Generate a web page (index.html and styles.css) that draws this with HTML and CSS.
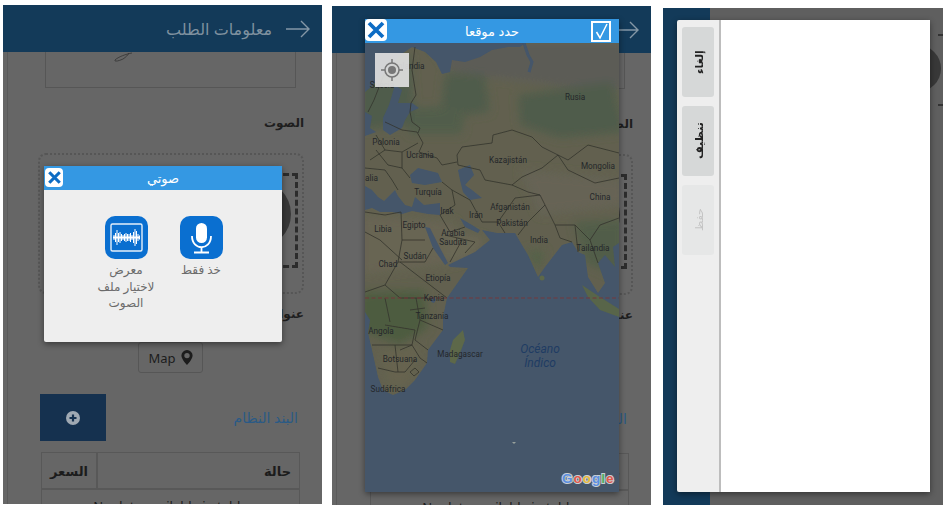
FILE: index.html
```html
<!DOCTYPE html>
<html>
<head>
  <meta charset="utf-8">
  <title>Order info</title>
  <link rel="stylesheet" href="styles.css">
</head>
<body>
  <div class="shots">

    <!-- first shot: audio picker -->
    <div class="phone phone-a">
      <div class="page" dir="rtl">
        <div class="topbar">
          <svg class="back" width="24" height="18" viewBox="0 0 24 18"><path d="M0 9H23M15 1L23 9L15 17" fill="none" stroke="#8497a6" stroke-width="1.400"/></svg>
          <span class="topbar-title">معلومات الطلب</span>
        </div>
        <div class="body">
          <div class="sign"><svg width="20" height="10" viewBox="0 0 20 10"><path d="M18 1C12 2 4 5 1 8C0 10 5 9 9 7C12 5 14 3 15 1" fill="none" stroke="#333" stroke-width=".8"/></svg></div>
          <div class="label first">الصوت</div>
          <div class="dotted"><div class="frame"><div class="disc"></div></div></div>
          <div class="label addr">عنوان</div>
          <div class="map-btn" dir="ltr">Map <svg width="12" height="15" viewBox="0 0 12 15"><path d="M6 0a5.600 5.600 0 0 0-5.600 5.600C.4 9.500 6 15 6 15s5.600-5.500 5.600-9.400A5.600 5.600 0 0 0 6 0zm0 8.300a2.700 2.700 0 1 1 0-5.400a2.700 2.700 0 0 1 0 5.400z" fill="#1c1c1c"/></svg></div>
          <div class="items">
            <span class="items-link">البند النظام</span>
            <div class="add"><svg width="14" height="14" viewBox="0 0 14 14"><circle cx="7" cy="7" r="7" fill="#9fa9b3"/><path d="M7 3.500V10.500M3.500 7H10.500" stroke="#15314f" stroke-width="2.200"/></svg></div>
          </div>
          <table class="grid">
            <tr><th>حالة</th><th class="price">السعر</th></tr>
            <tr><td colspan="2" dir="ltr">No data available in table</td></tr>
          </table>
        </div>
      </div>

      <div class="dialog dialog-audio">
        <div class="dialog-head">
          <span class="close small"><svg width="15" height="15" viewBox="0 0 20 20"><path d="M3 3L17 17M17 3L3 17" stroke="#0d6cc4" stroke-width="4.200"/></svg></span>
          <span class="dialog-title">صوتي</span>
        </div>
        <div class="choices" dir="rtl">
          <div class="choice">
            <div class="app-icon">
              <svg width="43" height="43" viewBox="0 0 43 43"><rect x="16" y="7" width="11" height="20" rx="5.500" fill="#fff"/><path d="M12 20c0 15 19 15 19 0M21.500 31V36M14 36.500H29" fill="none" stroke="#fff" stroke-width="1.800"/></svg>
            </div>
            <div class="choice-text">خذ فقط</div>
          </div>
          <div class="choice">
            <div class="app-icon">
              <svg width="43" height="43" viewBox="0 0 43 43"><rect x="6" y="8" width="31" height="27" rx="1.500" fill="none" stroke="#e4effa" stroke-width="1.400"/><path d="M8 21.500h27" stroke="#fff" stroke-width="2"/><path d="M9 19v5M10.500 17v9M12 14v15M13.500 17v9M15 16v11M16.500 18v7M18 19v5M19.500 18v7M21 17v9M22.500 18v7M24 18v7M25.500 17v9M27 19v5M28.500 16v11M30 13v17M31.500 15v13M33 18v7M34.500 19.500v4" stroke="#fff" stroke-width="1"/></svg>
            </div>
            <div class="choice-text">معرض<br>لاختيار ملف<br>الصوت</div>
          </div>
        </div>
      </div>
    </div>

    <!-- second shot: map picker -->
    <div class="phone phone-b">
      <div class="page" dir="rtl">
        <div class="topbar">
          <svg class="back" width="24" height="18" viewBox="0 0 24 18"><path d="M0 9H23M15 1L23 9L15 17" fill="none" stroke="#8497a6" stroke-width="1.400"/></svg>
          <span class="topbar-title">معلومات الطلب</span>
        </div>
        <div class="body">
          <div class="sign"></div>
          <div class="label first">الصوت</div>
          <div class="dotted"><div class="frame"><div class="disc"></div></div></div>
          <div class="label addr">عنوان</div>
          <div class="map-btn" dir="ltr">Map</div>
          <div class="items">
            <span class="items-link">البند النظام</span>
            <div class="add"></div>
          </div>
          <table class="grid">
            <tr><th>حالة</th><th class="price">السعر</th></tr>
            <tr><td colspan="2" dir="ltr">No data available in table</td></tr>
          </table>
        </div>
      </div>

      <div class="dialog dialog-map">
        <div class="dialog-head">
          <span class="close"><svg width="20" height="20" viewBox="0 0 20 20"><path d="M3 3L17 17M17 3L3 17" stroke="#0d6cc4" stroke-width="3.800"/></svg></span>
          <span class="dialog-title">حدد موقعا</span>
          <span class="confirm"><svg width="15" height="17" viewBox="0 0 15 17"><path d="M2.500 9L6 15L13 1" fill="none" stroke="#fff" stroke-width="1.500"/></svg></span>
        </div>
        <div class="map">
          <svg class="map-art" width="254" height="449" viewBox="365 43 254 449">
            <defs>
              <filter id="soft"><feGaussianBlur stdDeviation="5"/></filter>
              <filter id="fuzz"><feGaussianBlur stdDeviation=".35"/></filter>
            </defs>
            <g filter="url(#fuzz)">
              <rect x="365" y="43" width="254" height="449" fill="#62614f"/>
              <g filter="url(#soft)">
                <path d="M430 43H625V90L560 85L500 78L450 70Z" fill="#5b5c56"/>
                <path d="M445 73L485 75L490 112L440 118Z" fill="#4f5c4b"/>
                <path d="M405 108L465 106L462 134L410 134Z" fill="#515d4c"/>
                <path d="M518 95L612 82L625 132L560 138L520 125Z" fill="#4f5c4b"/>
                <path d="M360 55L410 55L415 125L360 130Z" fill="#505c4c"/>
                <path d="M360 292L425 290L428 328L400 345L360 330Z" fill="#4e5b41"/>
                <path d="M360 215L455 222L460 262L360 275Z" fill="#686553"/>
                <path d="M445 232L485 238L470 258L448 262Z" fill="#6a6755"/>
                <path d="M520 170L625 180L625 205L540 215Z" fill="#666354"/>
                <path d="M574 222L625 220L625 280L585 262Z" fill="#515d48"/>
                <path d="M525 250L545 250L540 274Z" fill="#55624a"/>
                <path d="M380 350L420 345L410 385L388 388Z" fill="#666450"/>
              </g>
              <g fill="#44566b">
                <path d="M365 43H525L520 47L508 47L492 50L480 57L465 62L452 60L450 72L442 74L436 62L425 52L412 47L400 55L385 72L372 86L365 92Z"/>
                <path d="M395 85L402 90L398 103L412 103L419 108L410 112L405 120L402 128L390 135L383 130L383 118L389 105Z"/>
                <path d="M365 112L372 116L370 128L376 132L365 136Z"/>
                <path d="M365 186L372 190L378 197L384 201L395 190L398 196L405 205L412 207L415 197L424 205L440 203L440 215L428 214L412 211L402 214L392 212L380 212L372 208L365 210Z"/>
                <path d="M410 175L418 168L438 173L442 182L425 185L412 183Z"/>
                <path d="M458 170L470 165L474 175L465 185L472 190L482 198L470 200L463 192L460 180Z"/>
                <path d="M460 218L472 225L480 230L478 233L465 227Z"/>
                <path d="M425 227L430 228L440 248L448 263L445 265L433 248Z"/>
                <path d="M619 492H365V312L370 320L368 333L372 350L378 377L383 390L393 395L405 390L415 380L427 363L428 350L443 330L443 317L447 298L468 268L450 267L448 265L475 252L490 240L482 230L497 233L515 233L522 245L528 255L538 277L545 267L562 245L572 242L578 252L585 255L588 277L598 293L605 283L598 263L605 255L615 267L613 247L619 243Z"/>
              </g>
              <path d="M524 43L528 55L532 62L529 72" fill="none" stroke="#44566b" stroke-width="3"/>
              <path d="M582 285L600 297L619 309V317L600 310L588 297Z" fill="#586548"/>
              <path d="M463 330L465 340L460 353L455 364L450 362L450 350L453 340Z" fill="#5d6748"/>
              <circle cx="542" cy="278" r="2.500" fill="#5d6748"/>
              <path d="M512 442h4l-2 2z" fill="#98a09c"/>
              <path d="M431 298l3 -1l2 3l-2 3l-3 -1z" fill="#44566b"/>
              <g fill="none" stroke="#34342c" stroke-width=".8">
                <path d="M415 47L412 70L416 95L411 103L410 112L412 122L420 128L418 133"/>
                <path d="M385 72L374 100L368 112"/>
                <path d="M457 155L462 147L492 143L493 135L512 130L532 137L542 147L558 155L542 168L522 177L512 185L485 180L480 170L458 165L457 155"/>
                <path d="M558 155L568 160L588 145L619 153M558 155L568 170L595 183L619 178"/>
                <path d="M385 122L402 130L417 132L423 143L419 152L437 158L442 165L457 162M376 135L385 150L402 152L418 143M376 150L388 165L402 168L410 178M365 168L385 170L392 180L398 190M402 152L402 168M385 150L370 160"/>
                <path d="M442 182L452 190L470 200L482 222L498 222L515 198L540 195L545 205L528 222L518 235M512 185L528 192L540 195M498 222L505 233M452 190L455 205L440 215L450 232L465 227"/>
                <path d="M545 205L555 225L575 225L590 240L600 225L619 218M555 225L560 238L572 242M575 225L578 252M590 240L598 263"/>
                <path d="M365 212L385 215L401 212L402 240M402 240H425M402 240L398 262L385 285L365 292M398 262L425 262L433 248M400 262L430 285L447 298M385 285L400 298L425 298L432 300M365 232L380 240L402 260"/>
                <path d="M445 235L475 242L465 253M450 262L462 240"/>
                <path d="M416 298L420 320L443 330M420 320L415 340L428 350M385 325L415 330L412 345L400 350M372 345L395 345L412 345L420 358L427 363M378 368L395 372L405 372L415 360M395 345L398 372M385 298L390 322M410 310L425 308"/>
                <path d="M410 372l5 -4l4 4l-5 4z"/>
              </g>
              <path d="M365 298H619" stroke="#74393a" stroke-width="1" stroke-dasharray="4 2.500"/>
            </g>
            <g class="map-labels" text-anchor="middle">
              <text x="575" y="100">Rusia</text>
              <text x="408" y="69">Finlandia</text>
              <text x="382" y="88">Suecia</text>
              <text x="386" y="145">Polonia</text>
              <text x="420" y="158">Ucrania</text>
              <text x="508" y="163">Kazajistán</text>
              <text x="598" y="169">Mongolia</text>
              <text x="369" y="181">Italia</text>
              <text x="428" y="195">Turquía</text>
              <text x="600" y="200">China</text>
              <text x="447" y="214">Irak</text>
              <text x="476" y="218">Irán</text>
              <text x="510" y="210">Afganistán</text>
              <text x="512" y="226">Pakistán</text>
              <text x="383" y="232">Libia</text>
              <text x="414" y="228">Egipto</text>
              <text x="453" y="236">Arabia</text>
              <text x="453" y="245">Saudita</text>
              <text x="539" y="243">India</text>
              <text x="593" y="251">Tailandia</text>
              <text x="415" y="259">Sudán</text>
              <text x="388" y="267">Chad</text>
              <text x="438" y="281">Etiopía</text>
              <text x="434" y="301">Kenia</text>
              <text x="432" y="319">Tanzania</text>
              <text x="381" y="334">Angola</text>
              <text x="460" y="357">Madagascar</text>
              <text x="400" y="362">Botsuana</text>
              <text x="388" y="392">Sudáfrica</text>
            </g>
            <g class="ocean" text-anchor="middle">
              <text x="540" y="353">Océano</text>
              <text x="540" y="367">Índico</text>
            </g>
            <text class="google" x="562" y="483"><tspan fill="#5a8fe0">G</tspan><tspan fill="#e0574a">o</tspan><tspan fill="#e8b93a">o</tspan><tspan fill="#5a8fe0">g</tspan><tspan fill="#4caf5f">l</tspan><tspan fill="#e0574a">e</tspan></text>
          </svg>
          <div class="locate">
            <svg width="22" height="22" viewBox="0 0 22 22"><circle cx="11" cy="11" r="7" fill="none" stroke="#777" stroke-width="1.500"/><circle cx="11" cy="11" r="4" fill="#777"/><path d="M11 0V4M11 18V22M0 11H4M18 11H22" stroke="#777" stroke-width="1.500"/></svg>
          </div>
        </div>
      </div>
    </div>

    <!-- third shot: signature pad on its side -->
    <div class="phone phone-c">
      <div class="side-bar"></div>
      <div class="side-page"></div>
      <span class="side-disc"></span>
      <span class="side-dash"></span>
      <div class="dialog dialog-sign">
        <div class="pad-tools">
          <div class="pad-btn">إلغاء</div>
          <div class="pad-btn">تنظيف</div>
          <div class="pad-btn off">حفظ</div>
        </div>
        <div class="pad"></div>
      </div>
    </div>

  </div>
</body>
</html>
```

FILE: styles.css
```css
body {
  margin: 0;
  background: #fff;
  font-family: "Noto Sans", "DejaVu Sans", sans-serif;
}
.shots {
  display: flex;
  align-items: flex-start;
  width: 948px;
  height: 514px;
  overflow: hidden;
}
.phone {
  position: relative;
  overflow: hidden;
  background: #666;
  width: 319px;
  height: 499px;
}
.phone-a {
  margin: 5px 0 0 3px;
}
.phone-b {
  margin: 6px 0 0 10px;
}
.phone-c {
  display: flex;
  width: 280px;
  height: 497px;
  margin: 8px 0 0 12px;
}

/* page behind the dialogs, already dimmed */
.topbar {
  display: flex;
  align-items: center;
  gap: 14px;
  height: 47px;
  padding-right: 12px;
  background: #133a59;
}
.topbar-title {
  font-size: 16px;
  color: #7f919f;
}
.body {
  margin-left: 4px;
  border-left: 1px solid #5a5a5a;
}
.sign {
  display: flex;
  align-items: flex-start;
  justify-content: flex-start;
  height: 35px;
  margin: 0 26px 0 37px;
  padding-left: 68px;
  border: 1px solid #565656;
  border-top: 0;
  direction: ltr;
}
.label {
  height: 20px;
  margin-right: 18px;
  font-size: 12px;
  font-weight: bold;
  line-height: 20px;
  color: #1e1e1e;
}
.first {
  margin-top: 25px;
}
.addr {
  margin-top: 10px;
}
.dotted {
  height: 137px;
  margin: 20px 18px 0 30px;
  padding: 0;
  border: 2px dotted #565656;
  border-radius: 8px;
}
.frame {
  display: flex;
  align-items: center;
  height: 89px;
  margin: 18px 4px 0 20px;
  padding-right: 4px;
  border: 3px dashed #2c2c2c;
}
.disc {
  width: 68px;
  height: 68px;
  margin-bottom: 14px;
  border-radius: 50%;
  background: #383838;
}
.map-btn {
  display: flex;
  align-items: center;
  justify-content: center;
  gap: 5px;
  width: 63px;
  height: 29px;
  margin: 18px auto 0 130px;
  border: 1px solid #565656;
  border-radius: 3px;
  font-size: 13px;
  color: #1c1c1c;
}
.items {
  display: flex;
  align-items: center;
  justify-content: space-between;
  height: 47px;
  margin: 21px 24px 0 32px;
}
.items-link {
  font-size: 14px;
  color: #2a5a85;
}
.add {
  display: flex;
  align-items: center;
  justify-content: center;
  width: 66px;
  height: 47px;
  background: #15314f;
}
.grid {
  width: 259px;
  margin: 11px 22px 0 0;
  border-collapse: separate;
  border-spacing: 0;
  font-size: 13px;
  color: #1c1c1c;
}
.grid th {
  height: 35px;
  padding: 0 8px;
  border: 1px solid #585858;
  text-align: right;
}
.grid th.price {
  width: 32px;
}
.grid td {
  padding: 7px 0;
  border: 1px solid #585858;
  text-align: center;
}

/* dialogs */
.dialog {
  position: absolute;
  display: flex;
  flex-direction: column;
  border-radius: 2px;
  background: #eee;
  box-shadow: 0 2px 6px rgba(0, 0, 0, .45);
}
.dialog-audio {
  left: 41px;
  top: 161px;
  width: 238px;
  height: 176px;
}
.dialog-map {
  left: 33px;
  top: 13px;
  width: 254px;
  height: 473px;
}
.dialog-sign {
  flex-direction: row;
  left: 14px;
  top: 12px;
  width: 253px;
  height: 472px;
}
.dialog-head {
  display: flex;
  flex: none;
  align-items: flex-start;
  position: relative;
  height: 24px;
  background: #3498e3;
}
.dialog-title {
  position: absolute;
  left: 0;
  right: 0;
  top: 2px;
  font-size: 13px;
  line-height: 20px;
  text-align: center;
  color: #fff;
}
.close {
  position: relative;
  z-index: 1;
  display: flex;
  align-items: center;
  justify-content: center;
  width: 22px;
  height: 22px;
  border-radius: 4px;
  background: #fff;
}
.close.small {
  width: 18px;
  height: 19px;
  margin: 2px 0 0 1px;
}
.confirm {
  position: relative;
  z-index: 1;
  display: flex;
  align-items: center;
  justify-content: center;
  width: 16px;
  height: 17px;
  margin: 2px 8px 0 auto;
  border: 2px solid #fff;
  background: #3498e3;
}

/* audio choices */
.choices {
  display: flex;
  justify-content: center;
  gap: 5px;
  padding: 26px 0 0 1px;
}
.choice {
  width: 70px;
  text-align: center;
}
.app-icon {
  width: 43px;
  height: 43px;
  margin: 0 auto;
  border-radius: 10px;
  background: #0a6fd0;
}
.app-icon svg {
  display: block;
}
.choice-text {
  margin-top: 3px;
  font-size: 12px;
  line-height: 16.500px;
  color: #6b6b6b;
}

/* map */
.map {
  position: relative;
  flex: 1;
  overflow: hidden;
}
.map-art {
  display: block;
}
.map-labels text {
  font-family: Roboto, sans-serif;
  font-size: 8.200px;
  fill: #24272a;
}
.ocean text {
  font-family: Roboto, sans-serif;
  font-size: 12px;
  font-style: italic;
  fill: #1f3c63;
}
.google {
  font-family: "Liberation Sans", sans-serif;
  font-size: 13.500px;
  font-weight: bold;
  letter-spacing: 1px;
  stroke: #c9ced3;
  stroke-width: 2px;
  paint-order: stroke;
}
.locate {
  position: absolute;
  left: 10px;
  top: 10px;
  display: flex;
  align-items: center;
  justify-content: center;
  width: 34px;
  height: 34px;
  background: rgba(226, 226, 226, .9);
}

/* third shot */
.side-bar {
  width: 47px;
  background: #133a59;
}
.side-page {
  flex: 1;
  background: #5f5f5f;
}
.side-disc {
  position: absolute;
  right: 2px;
  top: 37px;
  width: 30px;
  height: 47px;
  border-radius: 0 30px 30px 0;
  background: #383838;
}
.side-dash {
  position: absolute;
  right: 0;
  top: 26px;
  width: 5px;
  height: 2px;
  background: #333;
  box-shadow: 0 70px #333;
}
.pad-tools {
  display: flex;
  flex-direction: column;
  flex: none;
  gap: 9px;
  width: 32px;
  padding: 7px 5px;
  border-right: 2px solid #bdbdbd;
}
.pad-btn {
  display: flex;
  align-items: center;
  justify-content: center;
  height: 70px;
  border-radius: 3px;
  background: #d6d8d8;
  font-size: 11px;
  font-weight: bold;
  color: #222;
  writing-mode: vertical-rl;
  transform: rotate(180deg);
}
.pad-btn.off {
  background: #e6e7e7;
  font-weight: normal;
  color: #c4c4c4;
}
.pad {
  flex: 1;
  background: #fff;
}
```
